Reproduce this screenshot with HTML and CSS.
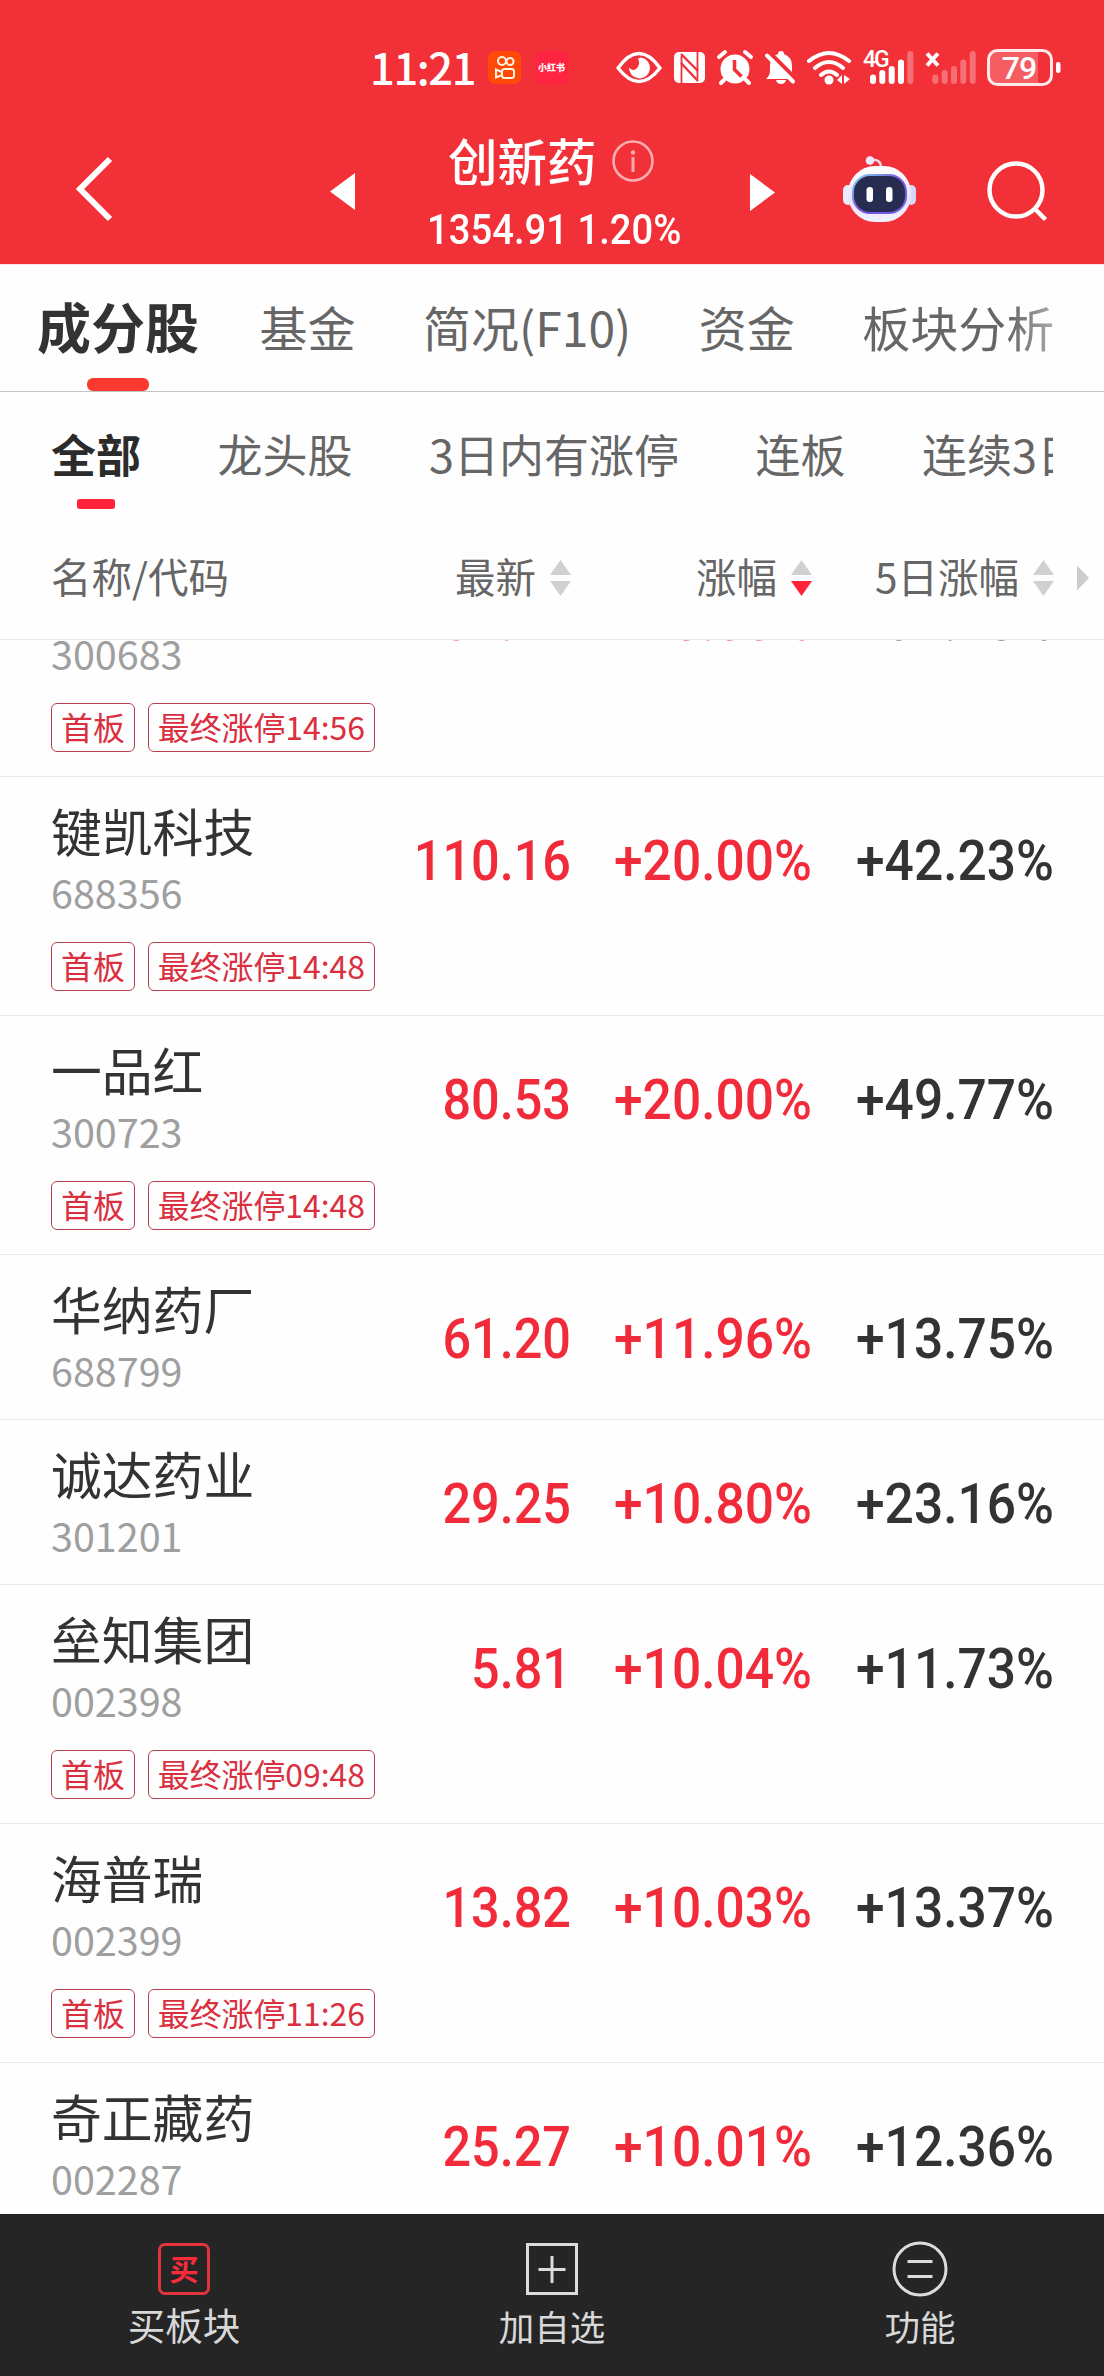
FILE: index.html
```html
<!DOCTYPE html>
<html lang="zh-CN">
<head>
    <meta charset="UTF-8">
    <meta name="viewport" content="width=device-width, initial-scale=1.0">
    <title>创新药</title>
    <link rel="stylesheet" href="styles.css">
</head>
<body>
    <header class="header">
        <!-- 状态栏 -->
        <div class="status-bar">
            <span class="time">11:21</span>
            <svg class="app-icon" viewBox="0 0 33 33">
                <rect width="33" height="33" rx="7" fill="#ff4906"/>
                <g fill="none" stroke="#fff3e0" stroke-width="2">
                    <circle cx="14" cy="10" r="4"/>
                    <circle cx="22" cy="10.5" r="3.5"/>
                    <rect x="14" y="18" width="12" height="9" rx="2.5"/>
                    <path d="M14 21l-6-2.500v8l6-2.500z"/>
                </g>
            </svg>
            <span class="red-app">小红书</span>
            <svg class="status-icons" width="446" height="40" viewBox="615 47 446 40">
                <!-- 护眼 -->
                <path d="M618 68q21-29 42 0q-21 27-42 0z" fill="none" stroke="#fff" stroke-width="3.500" stroke-linejoin="round"/>
                <path d="M641 57.500a10.500 10.500 0 1 1-12 10q3 4 7 1.500q5-4 2-10.500z" fill="#fff"/>
                <!-- NFC -->
                <rect x="674" y="52" width="31" height="31" rx="5" fill="#fff"/>
                <path d="M681.500 83V56M697.500 79V52" fill="none" stroke="#f23038" stroke-width="1.800"/>
                <path d="M681 54l17 17M681 63l17 18" fill="none" stroke="#f23038" stroke-width="2.400"/>
                <!-- 闹钟 -->
                <circle cx="735" cy="69" r="14.500" fill="#fff"/>
                <path d="M719 57l6-5M745 52l6 5M724 80l-3 3M746 80l3 3" stroke="#fff" stroke-width="4" stroke-linecap="round"/>
                <path d="M734.500 60v9.500l7 7" fill="none" stroke="#f23038" stroke-width="3.500"/>
                <!-- 静音 -->
                <path d="M766 79q4-3 4-9v-5q0-9 8-11q0-3 3-3t3 3q8 3 8 12v6q0 4 2 7z" fill="#fff"/>
                <path d="M776 80h10q-1 4-5 4t-5-4z" fill="#fff"/>
                <path d="M770 53l27 27" stroke="#f23038" stroke-width="4"/>
                <path d="M767 55.500l26 26" stroke="#fff" stroke-width="4" stroke-linecap="round"/>
                <!-- Wi-Fi -->
                <path d="M809 61q20-16 40 0M815 68q14-12 28 0M821 75q8-7 16 0" fill="none" stroke="#fff" stroke-width="4" stroke-linecap="round"/>
                <circle cx="829" cy="80" r="4.500" fill="#fff"/>
                <path d="M837 80l5-5v9zM844 75v9l6-5z" fill="#fff"/>
                <!-- 信号 -->
                <text x="863" y="67" class="net">4G</text>
                <g stroke="#fff" stroke-width="6" stroke-linecap="round">
                    <path d="M873 77.500V81M882.300 73V81M891.700 69V81M901 62.500V81"/>
                    <path d="M910.300 54V81" opacity=".3"/>
                    <path d="M935.300 77.500V81M944.700 73V81M954 69V81M963.300 62.500V81M972.700 54V81" opacity=".3"/>
                </g>
                <path d="M927 53.500l11 12M938 53.500l-11 12" stroke="#fff" stroke-width="4"/>
                <!-- 电量 -->
                <path d="M997 52h41v32h-41q-7 0-7-7v-18q0-7 7-7z" fill="#fff" opacity=".22"/>
                <rect x="988.500" y="50.500" width="63" height="34" rx="9" fill="none" stroke="#ffe9ea" stroke-width="3"/>
                <rect x="1056" y="62" width="4.500" height="11" rx="2" fill="#fff"/>
                <text x="1019" y="79" text-anchor="middle" class="battery">79</text>
            </svg>
        </div>
        <!-- 标题栏 -->
        <div class="title-bar">
            <svg class="back" width="38" height="66" viewBox="0 0 38 66"><path d="M35 3L5 33l30 30" fill="none" stroke="#fff" stroke-width="6"/></svg>
            <svg class="prev" width="25" height="37" viewBox="0 0 25 37"><path d="M25 0v37L0 18.500z" fill="#fff"/></svg>
            <div class="title">
                <div class="title-name">创新药
                    <svg width="42" height="42" viewBox="0 0 42 42" opacity=".6"><circle cx="21" cy="21" r="19.500" fill="none" stroke="#fff" stroke-width="2.600"/><path d="M21 17v15" stroke="#fff" stroke-width="3"/><circle cx="21" cy="12.500" r="2.200" fill="#fff"/></svg>
                </div>
                <div class="title-quote">1354.91 1.20%</div>
            </div>
            <svg class="next" width="25" height="37" viewBox="0 0 25 37"><path d="M0 0v37l25-18.500z" fill="#fff"/></svg>
            <svg class="robot" width="73" height="67" viewBox="0 0 73 67">
                <defs>
                    <linearGradient id="shell" x1="0" y1="0" x2="0" y2="1"><stop offset="0" stop-color="#fff"/><stop offset=".6" stop-color="#e6e4fb"/><stop offset="1" stop-color="#f4f2ff"/></linearGradient>
                    <linearGradient id="rim" x1="0" y1="0" x2="1" y2="1"><stop offset="0" stop-color="#7fd6ee"/><stop offset=".5" stop-color="#7d52dd"/><stop offset="1" stop-color="#6d5fe8"/></linearGradient>
                </defs>
                <path d="M27 4q11-2 11 8" fill="none" stroke="#f0dcec" stroke-width="2.500"/>
                <circle cx="27" cy="4.500" r="4.300" fill="#eeeafc"/>
                <rect x="0" y="29" width="10" height="20" rx="5" fill="#eceafc"/>
                <rect x="63" y="29" width="10" height="20" rx="5" fill="#d8d6f8"/>
                <rect x="5" y="10" width="63" height="56" rx="27" fill="url(#shell)"/>
                <rect x="10" y="19" width="53" height="38" rx="17" fill="#262d50" stroke="url(#rim)" stroke-width="2"/>
                <rect x="23.500" y="31" width="6.500" height="15" rx="3.200" fill="#fff"/>
                <rect x="43" y="31" width="6.500" height="15" rx="3.200" fill="#fff"/>
            </svg>
            <svg class="search" width="61" height="61" viewBox="0 0 61 61"><circle cx="29" cy="29" r="26.500" fill="none" stroke="#fff" stroke-width="4.500"/><path d="M47.500 47.500l11 11" stroke="#fff" stroke-width="4.500"/></svg>
        </div>
    </header>

    <!-- 主标签 -->
    <nav class="tabs">
        <span class="tab active">成分股</span>
        <span class="tab">基金</span>
        <span class="tab">简况(F10)</span>
        <span class="tab">资金</span>
        <span class="tab fade">板块分析</span>
    </nav>

    <!-- 筛选标签 -->
    <nav class="filters">
        <span class="filter active">全部</span>
        <span class="filter">龙头股</span>
        <span class="filter">3日内有涨停</span>
        <span class="filter">连板</span>
        <span class="filter">连续3日</span>
    </nav>

    <div class="table-head">
        <span>名称/代码</span>
        <span class="sort">最新<i class="arrows"></i></span>
        <span class="sort desc">涨幅<i class="arrows"></i></span>
        <span class="sort">5日涨幅<i class="arrows"></i></span>
        <i class="more"></i>
    </div>

    <main class="list">
        <div class="row tall first">
            <div class="stock"><div class="name"></div><div class="code">300683</div>
                <div class="tags"><span class="tag">首板</span><span class="tag">最终涨停14:56</span></div></div>
            <span class="num price red">39.22</span><span class="num red">+20.00%</span><span class="num">+34.98%</span>
        </div>
        <div class="row tall">
            <div class="stock"><div class="name">键凯科技</div><div class="code">688356</div>
                <div class="tags"><span class="tag">首板</span><span class="tag">最终涨停14:48</span></div></div>
            <span class="num price red">110.16</span><span class="num red">+20.00%</span><span class="num">+42.23%</span>
        </div>
        <div class="row tall">
            <div class="stock"><div class="name">一品红</div><div class="code">300723</div>
                <div class="tags"><span class="tag">首板</span><span class="tag">最终涨停14:48</span></div></div>
            <span class="num price red">80.53</span><span class="num red">+20.00%</span><span class="num">+49.77%</span>
        </div>
        <div class="row">
            <div class="stock"><div class="name">华纳药厂</div><div class="code">688799</div></div>
            <span class="num price red">61.20</span><span class="num red">+11.96%</span><span class="num">+13.75%</span>
        </div>
        <div class="row">
            <div class="stock"><div class="name">诚达药业</div><div class="code">301201</div></div>
            <span class="num price red">29.25</span><span class="num red">+10.80%</span><span class="num">+23.16%</span>
        </div>
        <div class="row tall">
            <div class="stock"><div class="name">垒知集团</div><div class="code">002398</div>
                <div class="tags"><span class="tag">首板</span><span class="tag">最终涨停09:48</span></div></div>
            <span class="num price red">5.81</span><span class="num red">+10.04%</span><span class="num">+11.73%</span>
        </div>
        <div class="row tall">
            <div class="stock"><div class="name">海普瑞</div><div class="code">002399</div>
                <div class="tags"><span class="tag">首板</span><span class="tag">最终涨停11:26</span></div></div>
            <span class="num price red">13.82</span><span class="num red">+10.03%</span><span class="num">+13.37%</span>
        </div>
        <div class="row">
            <div class="stock"><div class="name">奇正藏药</div><div class="code">002287</div></div>
            <span class="num price red">25.27</span><span class="num red">+10.01%</span><span class="num">+12.36%</span>
        </div>
    </main>

    <!-- 底部操作栏 -->
    <footer class="footer">
        <div class="action buy">
            <span class="buy-icon">买</span>
            <span>买板块</span>
        </div>
        <div class="action">
            <svg width="56" height="56" viewBox="0 0 56 56" fill="none" stroke="#dcdcdc" stroke-width="3"><path d="M3.500 3.500h49v49h-49zM28 15v27M14.500 28.500h27"/></svg>
            <span>加自选</span>
        </div>
        <div class="action">
            <svg width="56" height="56" viewBox="0 0 56 56" fill="none" stroke="#dcdcdc" stroke-width="3"><circle cx="28" cy="28" r="26"/><path d="M15.500 20.500h25M15.500 35.500h25"/></svg>
            <span>功能</span>
        </div>
    </footer>
</body>
</html>
```
FILE: styles.css
```css
* {
    box-sizing: border-box;
}
body {
    margin: 0;
    width: 1104px;
    height: 2376px;
    display: flex;
    flex-direction: column;
    overflow: hidden;
    background: #fefefe;
    color: #333;
    font-family: "Noto Sans CJK SC", sans-serif;
    white-space: nowrap;
}
svg {
    display: block;
    flex: none;
}
.header {
    height: 265px;
    background: #f23038;
    border-bottom: 1px solid #ffe3e5;
    color: #fff;
}
/* 状态栏 */
.status-bar {
    display: flex;
    align-items: center;
    height: 90px;
    padding: 47px 0 3px 370px;
}
.time {
    width: 118px;
    font-size: 43.5px;
    font-weight: 500;
    line-height: 38px;
    letter-spacing: -1.4px;
}
.app-icon {
    width: 33px;
    height: 33px;
}
.red-app {
    width: 33px;
    height: 33px;
    margin: 0 47px 0 14px;
    border-radius: 7px;
    background: #ff2442;
    font-size: 9px;
    font-weight: 900;
    line-height: 33px;
    text-align: center;
}
.net {
    font: 500 23px Roboto, sans-serif;
    letter-spacing: -2px;
    fill: #fff;
}
.battery {
    font: 500 32px Roboto, sans-serif;
    letter-spacing: -1px;
    fill: #fff;
}
/* 标题栏 */
.title-bar {
    display: flex;
    height: 174px;
}
.back {
    margin: 66px 0 0 75px;
}
.prev {
    margin: 83px 0 0 217px;
}
.title {
    width: 395px;
    padding-top: 40px;
}
.title-name {
    display: flex;
    align-items: center;
    gap: 15px;
    margin-left: 93px;
    font-size: 49.500px;
    font-weight: 500;
    line-height: 60px;
}
.title-name svg {
    margin-top: 2px;
}
.title-quote {
    margin: 15px 0 0 72px;
    font: 500 42px/50px Roboto, sans-serif;
    transform: scaleX(0.91);
    transform-origin: left;
}
.next {
    margin-top: 84px;
}
.robot {
    margin: 66px 0 0 68px;
}
.search {
    margin: 71px 0 0 71px;
}
/* 标签 */
.tabs {
    display: flex;
    gap: 67.500px;
    height: 127px;
    padding-left: 37px;
    border-bottom: 1px solid #c4c4c4;
    color: #666;
    font-size: 48px;
    line-height: 122px;
}
.tab.active {
    display: flex;
    flex-direction: column;
    align-items: center;
    margin-right: -7px;
    color: #333;
    font-size: 54px;
    font-weight: 700;
}
.tab.active::after {
    content: "";
    width: 62px;
    height: 13px;
    margin-top: -9px;
    border-radius: 6px;
    background: #fa3a30;
}
.tab.fade {
    background: linear-gradient(90deg, #666 76%, #aaa 100%);
    background-clip: text;
    -webkit-background-clip: text;
    color: transparent;
}
.filters {
    display: flex;
    gap: 76.500px;
    width: 1053px;
    height: 121px;
    padding-left: 51px;
    overflow: hidden;
    color: #666;
    font-size: 45px;
    line-height: 124px;
}
.filter.active {
    display: flex;
    flex-direction: column;
    align-items: center;
    color: #2b2b2b;
    font-weight: 700;
}
.filter.active::after {
    content: "";
    flex: none;
    width: 38px;
    height: 10px;
    margin-top: -17px;
    border-radius: 3px;
    background: #fe2337;
}
/* 表头 */
.table-head,
.row {
    display: grid;
    grid-template-columns: 330px 190px 241px 242px;
    padding-left: 51px;
}
.table-head {
    grid-template-columns: 330px 190px 241px 242px 50px;
    height: 127px;
    align-items: center;
    padding-bottom: 2px;
    border-bottom: 1px solid #e8e8e8;
    color: #666;
    font-size: 40.5px;
}
.sort {
    display: flex;
    justify-content: flex-end;
    align-items: center;
    gap: 14px;
}
.arrows {
    display: flex;
    flex-direction: column;
    gap: 6px;
    margin-top: 6px;
}
.arrows::before,
.arrows::after {
    content: "";
    width: 21px;
    height: 15px;
    background: #d0d0d0;
    clip-path: polygon(50% 0, 100% 100%, 0 100%);
}
.arrows::after {
    clip-path: polygon(0 0, 100% 0, 50% 100%);
}
.desc .arrows::after {
    background: #fe2337;
}
.more {
    width: 12px;
    height: 25px;
    margin: 6px 0 0 23px;
    background: #ccc;
    clip-path: polygon(0 0, 100% 50%, 0 100%);
}
/* 列表 */
.list {
    height: 1574px;
    overflow: hidden;
}
.row {
    height: 165px;
    border-bottom: 1px solid #e8e8e8;
}
.row.tall {
    height: 239px;
}
.row.first {
    margin-top: -102px;
}
.name {
    height: 83px;
    padding-top: 23px;
    font-size: 50.800px;
    line-height: 60px;
}
.code {
    margin-top: 12px;
    color: #9f9f9f;
    font-size: 39.500px;
    line-height: 40px;
}
.tags {
    display: flex;
    gap: 13px;
    margin-top: 30px;
}
.tag {
    height: 49px;
    padding: 0 9px;
    border: 1px solid #b8414d;
    border-radius: 6px;
    color: #da2f3f;
    font-size: 31.900px;
    line-height: 44px;
}
.num {
    padding-top: 54px;
    font: 500 56px/60px Roboto, sans-serif;
    text-align: right;
    transform: scaleX(0.92);
    transform-origin: right;
}
.price {
    transform: scaleX(0.9);
}
.first .num {
    padding-top: 52.500px;
}
.red {
    color: #f22b3b;
}
/* 底部 */
.footer {
    display: grid;
    grid-template-columns: repeat(3, 1fr);
    height: 162px;
    padding-top: 27px;
    background: #252525;
    color: #d8d8d8;
    font-size: 35.500px;
}
.action {
    display: flex;
    flex-direction: column;
    align-items: center;
    line-height: 58px;
}
.buy {
    font-size: 37.500px;
    line-height: 54px;
}
.buy-icon {
    width: 52px;
    height: 52px;
    margin: 2px 0;
    border: 3px solid #e2343e;
    border-radius: 7px;
    color: #fa2c3b;
    font-size: 29px;
    font-weight: 700;
    line-height: 44px;
    text-align: center;
}
```
